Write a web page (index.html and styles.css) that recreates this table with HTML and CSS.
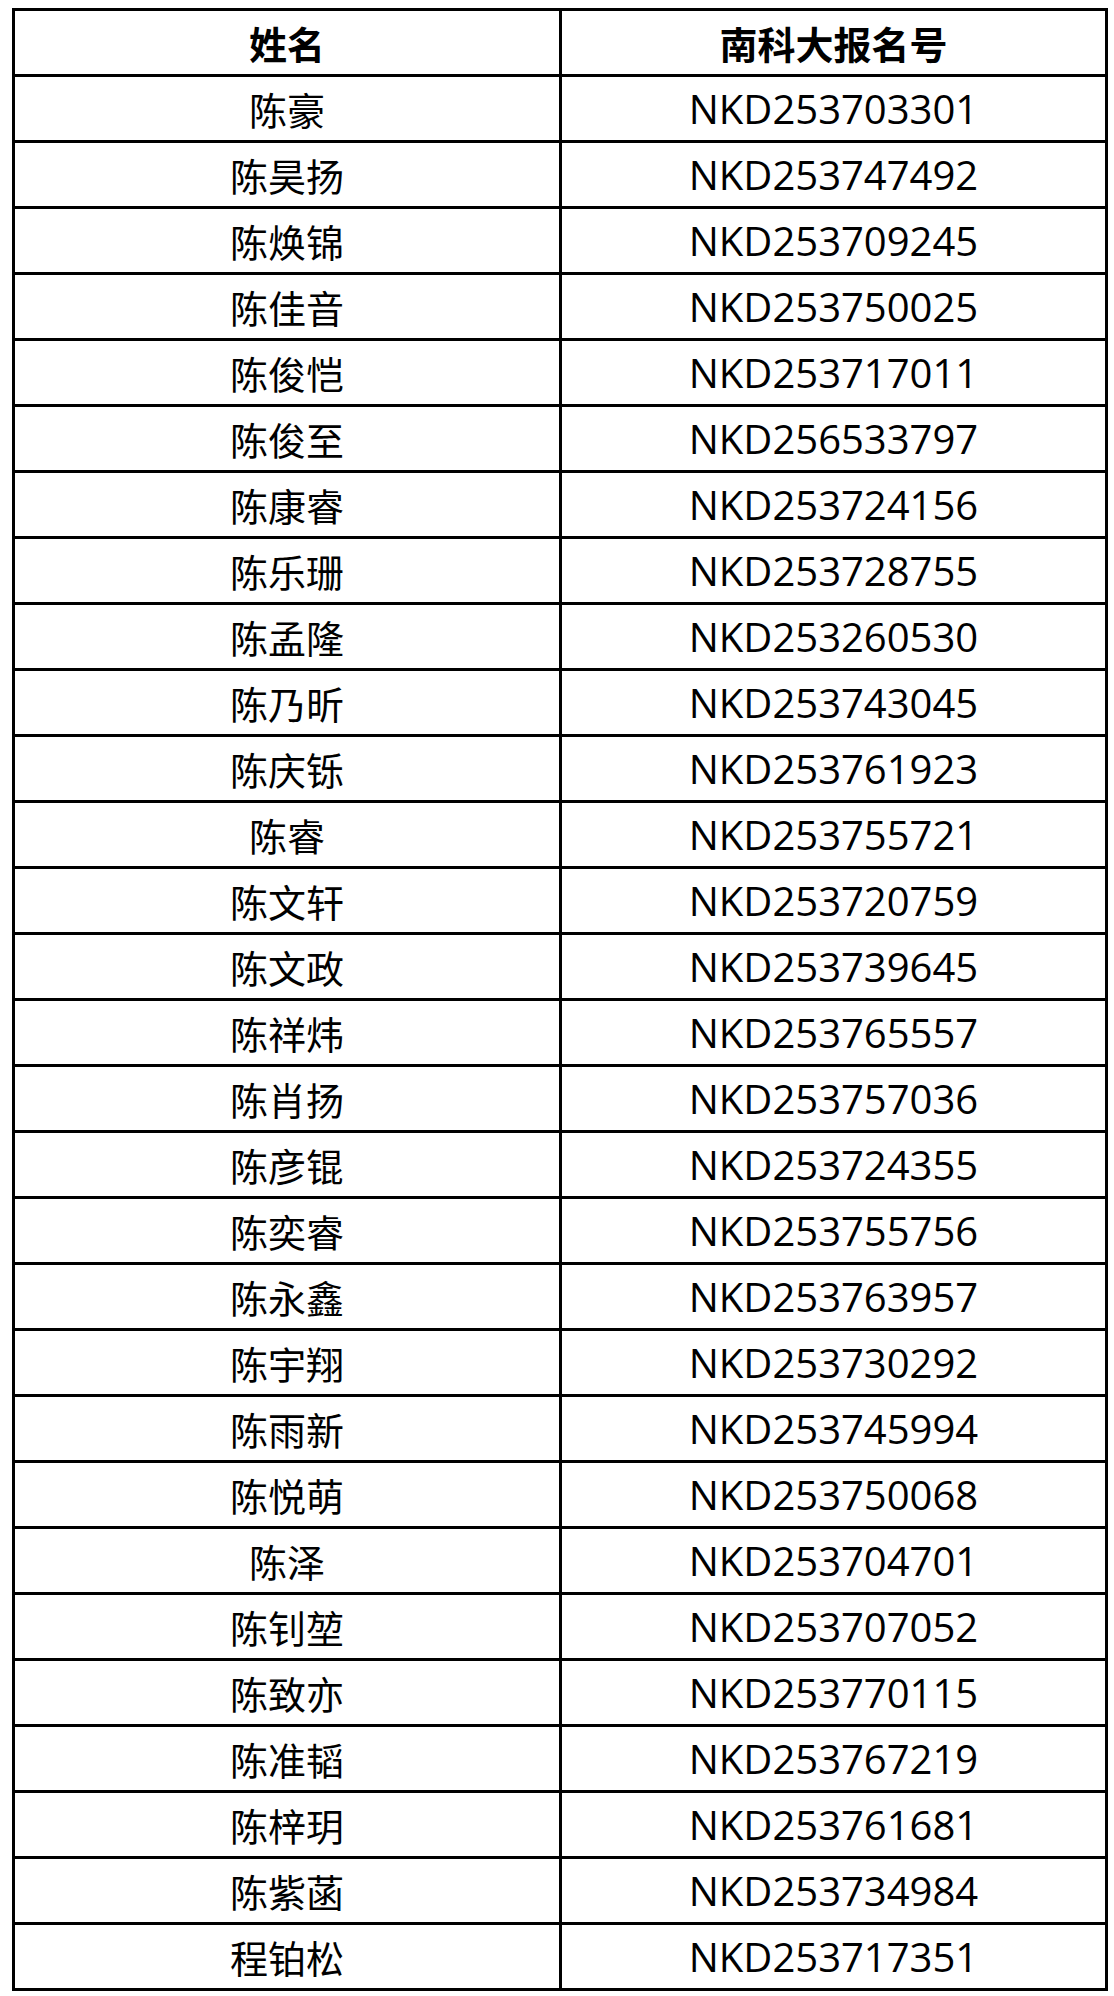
FILE: index.html
```html
<!DOCTYPE html>
<html lang="zh-CN">
<head>
<meta charset="utf-8">
<title>名单</title>
<link rel="stylesheet" href="styles.css">
</head>
<body>
<div class="sheet">
  <div class="cell head">姓名</div><div class="cell head">南科大报名号</div>
  <div class="cell name">陈豪</div><div class="cell num">NKD253703301</div>
  <div class="cell name">陈昊扬</div><div class="cell num">NKD253747492</div>
  <div class="cell name">陈焕锦</div><div class="cell num">NKD253709245</div>
  <div class="cell name">陈佳音</div><div class="cell num">NKD253750025</div>
  <div class="cell name">陈俊恺</div><div class="cell num">NKD253717011</div>
  <div class="cell name">陈俊至</div><div class="cell num">NKD256533797</div>
  <div class="cell name">陈康睿</div><div class="cell num">NKD253724156</div>
  <div class="cell name">陈乐珊</div><div class="cell num">NKD253728755</div>
  <div class="cell name">陈孟隆</div><div class="cell num">NKD253260530</div>
  <div class="cell name">陈乃昕</div><div class="cell num">NKD253743045</div>
  <div class="cell name">陈庆铄</div><div class="cell num">NKD253761923</div>
  <div class="cell name">陈睿</div><div class="cell num">NKD253755721</div>
  <div class="cell name">陈文轩</div><div class="cell num">NKD253720759</div>
  <div class="cell name">陈文政</div><div class="cell num">NKD253739645</div>
  <div class="cell name">陈祥炜</div><div class="cell num">NKD253765557</div>
  <div class="cell name">陈肖扬</div><div class="cell num">NKD253757036</div>
  <div class="cell name">陈彦锟</div><div class="cell num">NKD253724355</div>
  <div class="cell name">陈奕睿</div><div class="cell num">NKD253755756</div>
  <div class="cell name">陈永鑫</div><div class="cell num">NKD253763957</div>
  <div class="cell name">陈宇翔</div><div class="cell num">NKD253730292</div>
  <div class="cell name">陈雨新</div><div class="cell num">NKD253745994</div>
  <div class="cell name">陈悦萌</div><div class="cell num">NKD253750068</div>
  <div class="cell name">陈泽</div><div class="cell num">NKD253704701</div>
  <div class="cell name">陈钊堃</div><div class="cell num">NKD253707052</div>
  <div class="cell name">陈致亦</div><div class="cell num">NKD253770115</div>
  <div class="cell name">陈准韬</div><div class="cell num">NKD253767219</div>
  <div class="cell name">陈梓玥</div><div class="cell num">NKD253761681</div>
  <div class="cell name">陈紫菡</div><div class="cell num">NKD253734984</div>
  <div class="cell name">程铂松</div><div class="cell num">NKD253717351</div>
</div>
</body>
</html>
```
FILE: styles.css
```css
html, body {
  margin: 0;
  padding: 0;
  background: #ffffff;
}
body {
  padding: 8px 0 0 12px;
  font-family: "Noto Sans CJK SC", "Noto Sans", sans-serif;
  color: #000;
}
.sheet {
  display: grid;
  grid-template-columns: 544px 543px;
  grid-auto-rows: 63px;
  gap: 3px;
  padding: 3px;
  width: max-content;
  background: #000;
}
.cell {
  background: #fff;
  display: flex;
  align-items: center;
  justify-content: center;
  font-size: 38px;
  line-height: 1;
  white-space: nowrap;
}
.head {
  font-weight: 700;
}
.num {
  font-family: "Open Sans", "Noto Sans CJK SC", sans-serif;
  font-size: 40px;
}
```
